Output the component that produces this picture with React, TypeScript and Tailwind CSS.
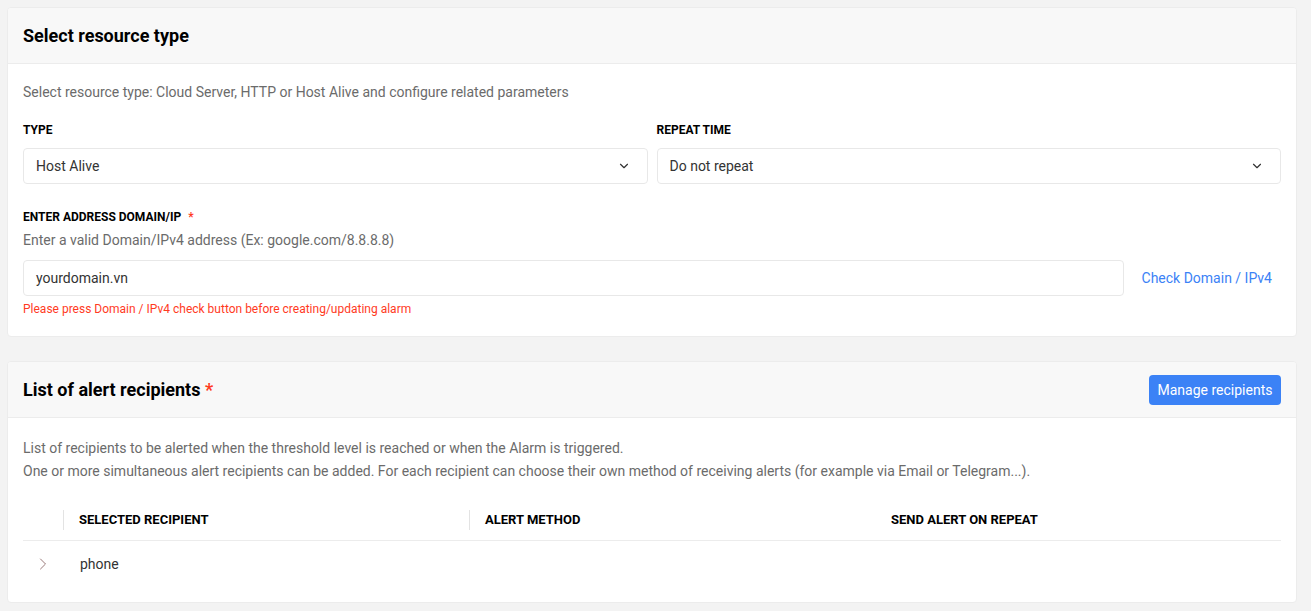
import { ChevronDown, ChevronRight } from "lucide-react";

function Select({ value }: { value: string }) {
  return (
    <div className="flex h-9 items-center justify-between rounded border border-[#e8e8e8] bg-white px-3 text-sm text-[#333]">
      <span>{value}</span>
      <ChevronDown size={14} strokeWidth={2} className="mr-1 text-[#333]" />
    </div>
  );
}

export default function App() {
  return (
    <div className="min-h-[611px] bg-[#f3f3f3] pl-[7px] pr-[14px] pt-[7px] font-['Roboto',sans-serif]">
      <div className="overflow-hidden rounded border border-[#ececec] bg-white">
        <div className="flex h-[56px] items-center border-b border-[#ececec] bg-[#f8f8f8] px-[15px]">
          <h2 className="text-lg font-bold text-black">Select resource type</h2>
        </div>
        <div className="px-[15px] pb-[19px] pt-[18px]">
          <p className="text-sm text-[#6b6b6b]">Select resource type: Cloud Server, HTTP or Host Alive and configure related parameters</p>
          <div className="mt-[20px] grid grid-cols-2 gap-[9px]">
            <div>
              <div className="mb-[10px] text-xs font-bold text-black">TYPE</div>
              <Select value="Host Alive" />
            </div>
            <div>
              <div className="mb-[10px] text-xs font-bold text-black">REPEAT TIME</div>
              <Select value="Do not repeat" />
            </div>
          </div>
          <div className="mt-[25px] text-xs font-bold text-black">
            ENTER ADDRESS DOMAIN/IP <span className="ml-1 text-[#ff3b1f]">*</span>
          </div>
          <p className="mt-[5px] text-sm text-[#6b6b6b]">Enter a valid Domain/IPv4 address (Ex: google.com/8.8.8.8)</p>
          <div className="mt-[10px] flex items-center">
            <div className="flex h-9 flex-1 items-center rounded border border-[#e8e8e8] px-3 text-sm text-[#333]">yourdomain.vn</div>
            <button className="ml-[18px] mr-[9px] text-sm text-[#3b82f6]">Check Domain / IPv4</button>
          </div>
          <p className="mt-[5px] text-xs text-[#ff3b1f]">Please press Domain / IPv4 check button before creating/updating alarm</p>
        </div>
      </div>

      <div className="mt-[24px] overflow-hidden rounded border border-[#ececec] bg-white">
        <div className="flex h-[56px] items-center justify-between border-b border-[#ececec] bg-[#f8f8f8] px-[15px]">
          <h2 className="text-lg font-bold text-black">
            List of alert recipients <span className="text-[#ff3b1f]">*</span>
          </h2>
          <button className="flex h-[30px] w-[132px] items-center justify-center rounded bg-[#3b82f6] text-sm text-white">Manage recipients</button>
        </div>
        <div className="px-[15px] pb-[16px] pt-[19px]">
          <p className="text-sm leading-[23px] text-[#6b6b6b]">List of recipients to be alerted when the threshold level is reached or when the Alarm is triggered.</p>
          <p className="text-sm leading-[23px] text-[#6b6b6b]">One or more simultaneous alert recipients can be added. For each recipient can choose their own method of receiving alerts (for example via Email or Telegram...).</p>
          <div className="mt-[16px]">
            <div className="flex h-[42px] items-center border-b border-[#ececec] text-[13px] font-bold text-black">
              <div className="w-10" />
              <div className="flex h-5 w-[406px] items-center border-l border-[#e3e3e3] pl-[15px]">SELECTED RECIPIENT</div>
              <div className="flex h-5 w-[406px] items-center border-l border-[#e3e3e3] pl-[15px]">ALERT METHOD</div>
              <div className="flex h-5 flex-1 items-center pl-[16px]">SEND ALERT ON REPEAT</div>
            </div>
            <div className="flex h-[45px] items-center text-sm text-[#333]">
              <div className="flex w-10 items-center pl-[10px]">
                <ChevronRight size={20} strokeWidth={1.2} className="text-[#9a7a7a]" />
              </div>
              <div className="pl-[17px]">phone</div>
            </div>
          </div>
        </div>
      </div>
    </div>
  );
}
